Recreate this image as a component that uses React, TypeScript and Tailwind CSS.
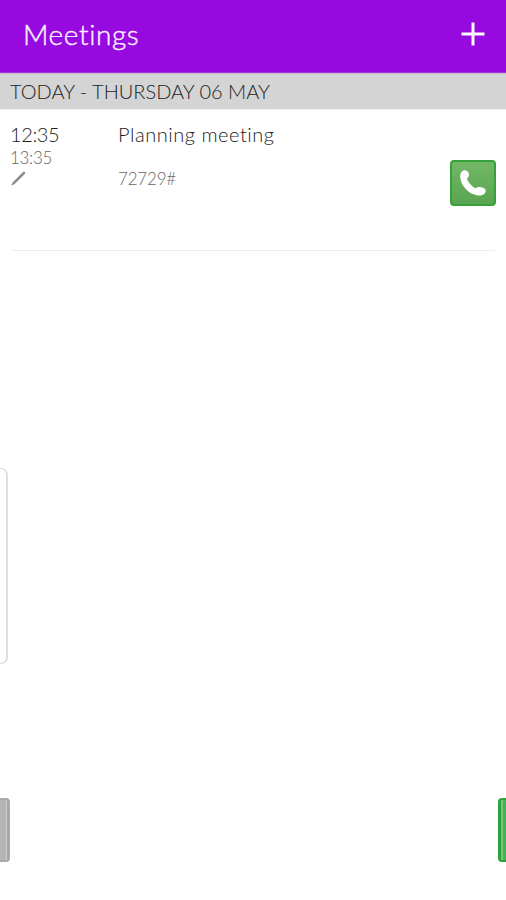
import React from "react";

function PhoneIcon() {
  return (
    <svg width="26" height="26" viewBox="0 0 26 26" fill="none">
      <path
        d="M3.3 0.6C5.2 -0.2 7.6 0.7 8.6 3C9.5 5.2 8.8 7.2 6.9 8.6C8.1 12.6 11.4 16.3 15.6 18.4C17 17.1 18.6 16.8 21.2 17.2C24.6 17.7 26.1 19.3 25.6 21.4C25 24.2 21.6 25.8 17.6 25.4C8.6 24.4 0.3 15.4 0.2 6.6C0.2 3.6 1.2 1.5 3.3 0.6Z"
        fill="white"
      />
    </svg>
  );
}

function Header() {
  return (
    <header className="flex h-[73px] shrink-0 items-start justify-between border-b border-[#9f35dc] bg-[#9609df] pl-[23px] pr-[21px]">
      <h1 className="mt-[15px] text-[28px] leading-[38px] font-light tracking-[0.6px] text-[#fbf0ff] [-webkit-text-stroke:0.4px_#fbf0ff]">
        Meetings
      </h1>
      <button aria-label="Add meeting" className="mt-[22px]">
        <svg width="24" height="24" viewBox="0 0 24 24">
          <path d="M12 0.5V23.5M0.5 12H23.5" stroke="white" strokeWidth="3" />
        </svg>
      </button>
    </header>
  );
}

function Meeting() {
  return (
    <article className="mx-[11px] flex h-[141px] shrink-0 border-b border-[#eeeeee]">
      <div className="-ml-px w-[108px]">
        <div className="mt-[12px] text-[20px] leading-6 font-light tracking-[-0.4px] text-[#222]">12:35</div>
        <div className="mt-px text-[17px] leading-[22px] font-light tracking-[-0.3px] text-[#666]">13:35</div>
        <svg className="mt-[2px] ml-[1px]" width="15" height="15" viewBox="0 0 15 15">
          <path d="M0.3 14.5L1.6 11.5L12 0.9Q12.8 0.1 13.8 1Q14.8 2 13.8 3L3.4 13.2Z" fill="#8d8d8d" />
        </svg>
      </div>
      <div className="flex-1">
        <h2 className="mt-[12px] text-[20px] leading-6 font-light tracking-[0.53px] text-[#222]">
          Planning meeting
        </h2>
        <p className="mt-[22px] text-[17px] leading-[22px] font-light tracking-[-0.2px] text-[#666]">72729#</p>
      </div>
      <button
        aria-label="Call"
        className="-mr-px mt-[50px] flex h-[46px] w-[46px] items-center justify-center rounded-[4px] border-2 border-[#37a13b] bg-linear-to-b from-[#72b765] to-[#5aa552]"
      >
        <PhoneIcon />
      </button>
    </article>
  );
}

export default function App() {
  return (
    <main className="flex h-[900px] w-[506px] flex-col overflow-hidden bg-white font-['Lato',sans-serif]">
      <Header />
      <div className="h-[36px] shrink-0 border-t border-[#c2b8c8] bg-[#d4d4d4] pl-[10px] text-[20px] leading-[34px] font-light text-[#222]">
        TODAY - THURSDAY 06 MAY
      </div>
      <div className="h-px shrink-0 bg-[#eeeeee]" />
      <Meeting />
      <div className="mt-[217px] h-[196px] w-[8px] shrink-0 rounded-r-[7px] border-y border-r-2 border-[#dedede]" />
      <div className="mt-[134px] flex h-[64px] shrink-0 justify-between">
        <div className="w-[10px] rounded-r-[4px] border-y-2 border-r-[3px] border-[#a9a9a9] bg-[#b5b5b5]">
          <div className="ml-auto h-full w-px bg-[#cecece]" />
        </div>
        <div className="w-[8px] rounded-l-[4px] border-y-2 border-l-[3px] border-[#2ba33d] bg-[#45b254]">
          <div className="h-full w-[2px] bg-[#75c67c]" />
        </div>
      </div>
    </main>
  );
}
